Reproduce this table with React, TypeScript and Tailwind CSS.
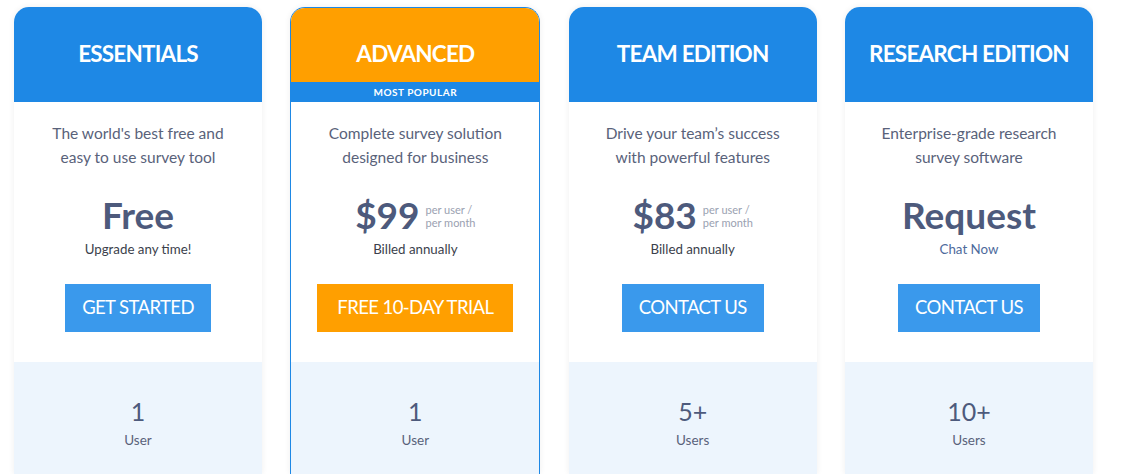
const plans = [
  {
    name: "ESSENTIALS",
    desc: ["The world's best free and", "easy to use survey tool"],
    price: "Free",
    perUser: false,
    note: "Upgrade any time!",
    cta: "GET STARTED",
    count: "1",
    unit: "User",
    popular: false,
  },
  {
    name: "ADVANCED",
    desc: ["Complete survey solution", "designed for business"],
    price: "$99",
    perUser: true,
    note: "Billed annually",
    cta: "FREE 10-DAY TRIAL",
    count: "1",
    unit: "User",
    popular: true,
  },
  {
    name: "TEAM EDITION",
    desc: ["Drive your team’s success", "with powerful features"],
    price: "$83",
    perUser: true,
    note: "Billed annually",
    cta: "CONTACT US",
    count: "5+",
    unit: "Users",
    popular: false,
  },
  {
    name: "RESEARCH EDITION",
    desc: ["Enterprise-grade research", "survey software"],
    price: "Request",
    perUser: false,
    note: "Chat Now",
    cta: "CONTACT US",
    count: "10+",
    unit: "Users",
    popular: false,
  },
];

const App = () => {
  return (
    <section className="flex gap-[28.33px] pl-[14px] pt-[7px] h-[474px] overflow-hidden bg-white font-['Lato','Open_Sans',sans-serif]">
      {plans.map(p => (
        <div
          key={p.name}
          className={
            p.popular
              ? "w-[250px] shrink-0 flex flex-col rounded-t-[15px] border border-b-0 border-[#1e88e5] overflow-hidden shadow-[0_0_6px_rgba(0,0,0,0.07)]"
              : "w-[248px] shrink-0 flex flex-col rounded-t-[15px] overflow-hidden shadow-[0_0_6px_rgba(0,0,0,0.07)]"
          }
        >
          {p.popular ? (
            <div className="flex flex-col">
              <div className="h-[74px] bg-[#ff9f00] flex items-end justify-center pb-[13px]">
                <h2 className="text-white text-[22.5px] tracking-[-0.8px] font-bold leading-[30px]">{p.name}</h2>
              </div>
              <div className="h-[20px] bg-[#1e88e5] text-white text-[10px] font-bold tracking-[0.5px] grid place-content-center">
                MOST POPULAR
              </div>
            </div>
          ) : (
            <div className="h-[95px] bg-[#1e88e5] flex items-center justify-center pb-[2px]">
              <h2 className="text-white text-[22.5px] tracking-[-0.8px] font-bold leading-[30px]">{p.name}</h2>
            </div>
          )}

          <div className="bg-white flex flex-col items-center pt-[19px] pb-[30px] text-center">
            <p className="text-[15.5px] leading-[24px] text-[#59627a]">
              {p.desc[0]}
              <br />
              {p.desc[1]}
            </p>
            <div className="mt-[26px] h-[40px] flex items-center gap-[6px]">
              <span className="text-[37px] leading-[40px] font-bold text-[#4d5a7c]">{p.price}</span>
              {p.perUser && (
                <span className="text-[11px] leading-[13px] text-[#9aa1b1] text-left pt-[1px]">
                  per user /
                  <br />
                  per month
                </span>
              )}
            </div>
            <p
              className={
                p.note === "Chat Now"
                  ? "mt-[6px] text-[13.3px] leading-[16px] text-[#4d6a9c]"
                  : "mt-[6px] text-[13.3px] leading-[16px] text-[#3b3f4c]"
              }
            >
              {p.note}
            </p>
            <button
              className={
                p.popular
                  ? "mt-[27px] h-[48px] px-[20px] bg-[#ff9f00] text-white text-[18.5px] tracking-[-0.6px]"
                  : "mt-[27px] h-[48px] px-[17px] bg-[#3a99ec] text-white text-[18.5px] tracking-[-0.6px]"
              }
            >
              {p.cta}
            </button>
          </div>

          <div className="flex-1 bg-[#edf5fd] flex flex-col items-center pt-[33px] text-center">
            <p className="text-[25px] leading-[32px] text-[#4d5a7c]">{p.count}</p>
            <p className="mt-[5px] text-[13.5px] leading-[16px] text-[#59627a]">{p.unit}</p>
          </div>
        </div>
      ))}
    </section>
  );
};

export default App;
